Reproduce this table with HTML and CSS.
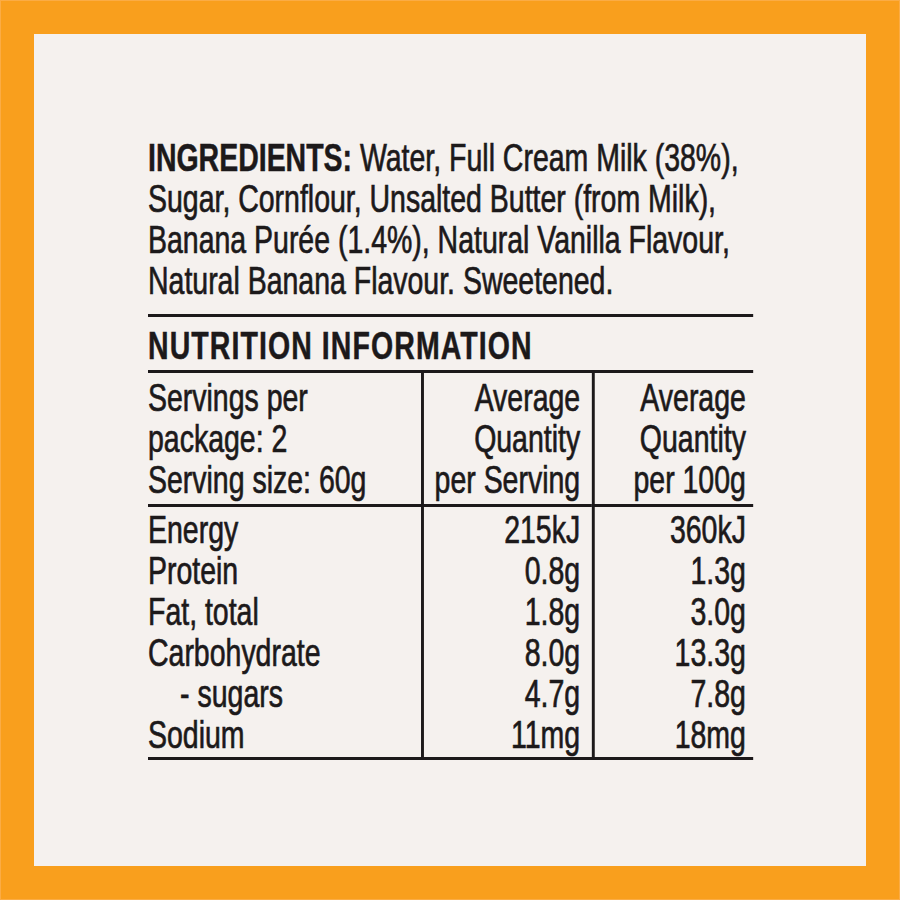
FILE: index.html
```html
<!DOCTYPE html>
<html lang="en">
<head>
<meta charset="utf-8">
<title>Nutrition Information</title>
<link rel="stylesheet" href="styles.css">
</head>
<body>
<div class="frame">
  <div class="panel">
    <div class="label">
      <p class="ingredients"><span class="b">INGREDIENTS:</span> Water, Full Cream Milk (38%),<br>Sugar, Cornflour, Unsalted Butter (from Milk),<br>Banana Purée (1.4%), Natural Vanilla Flavour,<br>Natural Banana Flavour. Sweetened.</p>
      <section class="nutrition">
        <h2 class="heading">NUTRITION INFORMATION</h2>
        <div class="table">
          <div class="cell head c1">Servings per<br>package: 2<br>Serving size: 60g</div>
          <div class="cell head c2">Average<br>Quantity<br>per Serving</div>
          <div class="cell head c3">Average<br>Quantity<br>per 100g</div>

          <div class="cell first c1">Energy</div>
          <div class="cell first c2">215kJ</div>
          <div class="cell first c3">360kJ</div>

          <div class="cell c1">Protein</div>
          <div class="cell c2">0.8g</div>
          <div class="cell c3">1.3g</div>

          <div class="cell c1">Fat, total</div>
          <div class="cell c2">1.8g</div>
          <div class="cell c3">3.0g</div>

          <div class="cell c1">Carbohydrate</div>
          <div class="cell c2">8.0g</div>
          <div class="cell c3">13.3g</div>

          <div class="cell c1 sub">- sugars</div>
          <div class="cell c2">4.7g</div>
          <div class="cell c3">7.8g</div>

          <div class="cell last c1">Sodium</div>
          <div class="cell last c2">11mg</div>
          <div class="cell last c3">18mg</div>
        </div>
      </section>
    </div>
  </div>
</div>
</body>
</html>
```
FILE: styles.css
```css
html, body {
  margin: 0;
  padding: 0;
  overflow: hidden;
  background: #f9a032;
}

.frame {
  width: 900px;
  height: 900px;
  box-sizing: border-box;
  padding: 33px;
  background: #f99f1d;
  border: 1px solid #fbac45;
}

.panel {
  height: 832px;
  box-sizing: border-box;
  background: #f5f1ee;
  padding: 103px 0 0 114px;
}

.label {
  width: 829px;
  transform: scaleX(0.73);
  transform-origin: 0 0;
  font-family: "Liberation Sans", Arial, sans-serif;
  font-size: 39px;
  line-height: 41px;
  color: #1c191a;
  -webkit-text-stroke: 0.7px #1c191a;
}

.ingredients {
  margin: 0;
}

.b {
  font-weight: 700;
  -webkit-text-stroke: 0.5px #1c191a;
}

.nutrition {
  margin-top: 13px;
  border-top: 3px solid #1c191a;
}

.heading {
  margin: 0;
  padding-top: 8px;
  font-size: 39px;
  line-height: 41px;
  font-weight: 700;
  letter-spacing: 1.5px;
  -webkit-text-stroke: 0.5px #1c191a;
}

.table {
  margin-top: 4px;
  display: grid;
  grid-template-columns: 374px 234px 221px;
  border-top: 3px solid #1c191a;
  border-bottom: 3px solid #1c191a;
}

.cell {
  white-space: nowrap;
}

.c2, .c3 {
  border-left: 4px solid #1c191a;
  text-align: right;
}

.c2 {
  padding-right: 16px;
}

.c3 {
  padding-right: 10px;
}

.head {
  padding-top: 4px;
  padding-bottom: 4px;
  border-bottom: 3px solid #1c191a;
}

.first {
  padding-top: 2px;
}

.last {
  padding-bottom: 2px;
}

.sub {
  padding-left: 44px;
}
```
